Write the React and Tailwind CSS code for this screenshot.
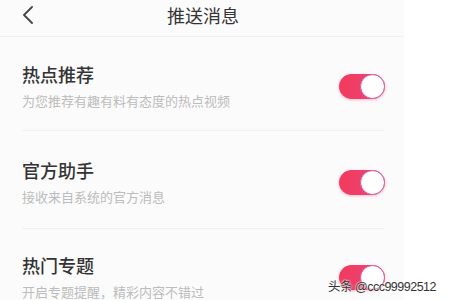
const items = [
  { title: "热点推荐", desc: "为您推荐有趣有料有态度的热点视频", pt: "pt-[25px]", pb: "pb-[20px]" },
  { title: "官方助手", desc: "接收来自系统的官方消息", pt: "pt-[27px]", pb: "pb-[22px]" },
  { title: "热门专题", desc: "开启专题提醒，精彩内容不错过", pt: "pt-[24px]", pb: "pb-[20px]" },
];

function Toggle() {
  return (
    <div className="relative w-[46px] h-[25px] rounded-full bg-gradient-to-r from-[#f23a5c] to-[#e9457a] shadow-[0_1px_3px_rgba(233,69,122,0.35)]">
      <div className="absolute right-0 top-0 w-[25px] h-[25px] rounded-full bg-white border-[1.5px] border-[#d95a98]" />
    </div>
  );
}

function Row({ title, desc, pt, pb, last }) {
  return (
    <div className={pt}>
      <div className={"flex items-center mr-[19px] " + pb + " " + (last ? "" : "border-b border-[#f1f1f1]")}>
        <div className="flex-1">
          <div className="text-[18px] leading-[24px] font-medium text-[#333]">{title}</div>
          <div className="mt-[6px] text-[13px] leading-[18px] text-[#bcbcbc]">{desc}</div>
        </div>
        <Toggle />
      </div>
    </div>
  );
}

export default function App() {
  return (
    <div
      className="relative w-[450px] h-[300px] overflow-hidden bg-white flex"
      style={{ fontFamily: '"Noto Sans CJK SC", "Noto Sans", sans-serif' }}
    >
      <div className="w-[404px] h-full bg-[#fbfbfb] flex flex-col">
        <div className="h-[37px] flex items-center border-b border-[#f0f0f0] relative shrink-0">
          <svg className="absolute left-[21px] top-[6px]" width="14" height="18" viewBox="0 0 14 18">
            <polyline points="11,1 3,9 11,17" fill="none" stroke="#444" strokeWidth="1.8" strokeLinecap="round" strokeLinejoin="round" />
          </svg>
          <div className="w-full text-center text-[18px] leading-[24px] text-[#333] -mt-[6px] pl-[2px]">推送消息</div>
        </div>
        <div className="pl-[22px]">
          {items.map((it, i) => (
            <Row key={i} {...it} last={i === items.length - 1} />
          ))}
        </div>
      </div>
      <div
        className="absolute left-[328px] top-[278px] whitespace-nowrap text-[12.5px] leading-[18px] tracking-[-0.5px] text-[#333] [text-shadow:0_0_2px_#fff,0_0_2px_#fff]"
        style={{ fontFamily: '"Liberation Sans", "Noto Sans CJK SC", sans-serif' }}
      >
        头条 @ccc99992512
      </div>
    </div>
  );
}
